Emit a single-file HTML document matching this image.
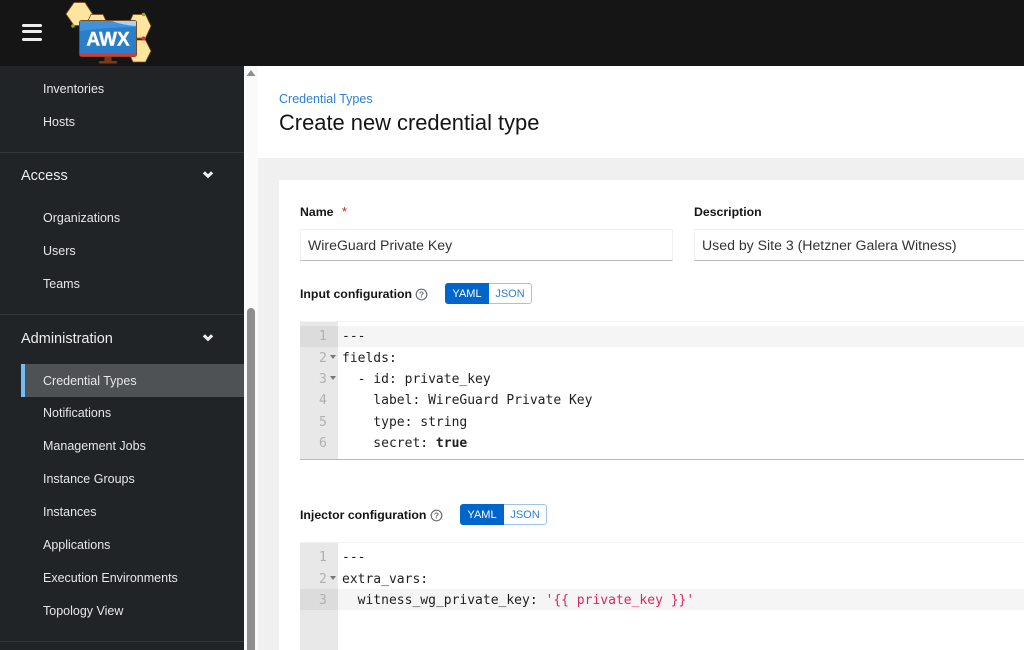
<!DOCTYPE html>
<html lang="en"><head><meta charset="utf-8"><title>Create new credential type</title>
<style>
html,body{margin:0;padding:0;width:1024px;height:650px;overflow:hidden;background:#fff}
body{position:relative;font-family:"Liberation Sans",sans-serif}
.b{position:absolute}
.t{position:absolute;white-space:pre;line-height:20px;height:20px}
.n{color:#e6e7e8;font-size:12.5px}
.h{color:#eceded;font-size:14.5px}
.l{color:#151515;font-size:12.3px;font-weight:bold}
.v{color:#333;font-size:14.1px}
.c{color:#1f1f1f;font-family:"DejaVu Sans Mono",monospace;font-size:13px}
.g{color:#b0b0b0;font-family:"DejaVu Sans Mono",monospace;font-size:13px}
.y{position:absolute;box-sizing:border-box;height:21px;background:#06c;color:#fff;font-size:11px;line-height:22px;text-align:center;border-radius:3px 0 0 3px;width:44px}
.j{position:absolute;box-sizing:border-box;height:21px;background:#fff;color:#2b7fd6;font-size:11px;line-height:21px;text-align:center;border:1px solid #9cc4ec;border-left:0;border-radius:0 3px 3px 0;width:43px}
</style></head><body>
<div class="b" style="left:0;top:0;width:1024px;height:66px;background:#151515"></div>
<div class="b" style="left:22px;top:24px;width:20px;height:3.300px;background:#eee;border-radius:1.500px"></div>
<div class="b" style="left:22px;top:30px;width:20px;height:3.300px;background:#eee;border-radius:1.500px"></div>
<div class="b" style="left:22px;top:37.500px;width:20px;height:3.300px;background:#eee;border-radius:1.500px"></div>
<svg class="b" style="left:60px;top:0" width="100" height="66" viewBox="60 0 100 66">
<g fill="#fbe59f" stroke="#7c4a22" stroke-width=".8">
<path d="M66 14 74 2.500H85L92.500 14 85 25.500H74Z"/>
<path d="M85 27 91 14.500H103L109 27 103 38H91Z"/>
<path d="M128 26 133 14.500H145.500L151 26 145.500 38H133Z"/>
<path d="M128 51 133 40H145.500L151 51 145.500 62H133Z"/></g>
<path d="M136 38.500H143" stroke="#7c4a22"/>
<circle cx="143.500" cy="38.500" r="2" fill="#e0303a"/><circle cx="143.500" cy="14.500" r="1.800" fill="#8aa82c"/><circle cx="73" cy="26" r="1.800" fill="#8aa82c"/>
<rect x="104.500" y="56" width="7" height="6" fill="#7c3a1c"/><rect x="99" y="61" width="18" height="2.500" rx="1" fill="#7c3a1c"/>
<rect x="79.500" y="20.500" width="57" height="36" rx="2" fill="#2b7fca" stroke="#7c4a22"/>
<path d="M80 21H136V27Q108 27 80 31Z" fill="#3f93da"/><path d="M112 21H136V26Q122 25 112 21Z" fill="#a8d6f4"/>
<rect x="80" y="53.500" width="56" height="2.800" fill="#e2342f"/>
<text x="108" y="45.500" text-anchor="middle" font-family="Liberation Sans" font-weight="bold" font-size="19" fill="#fff" stroke="#fff" stroke-width=".4">AWX</text>
</svg>

<div class="b" style="left:0;top:66px;width:244px;height:584px;background:#212427"></div>
<div class="b" style="left:244px;top:66px;width:14px;height:584px;background:#fafafa"></div>
<div class="b" style="left:258px;top:66px;width:766px;height:92px;background:#fff"></div>
<div class="b" style="left:258px;top:158px;width:766px;height:492px;background:#f0f0f0"></div>
<div class="b" style="left:279px;top:180px;width:745px;height:470px;background:#fff"></div>
<div class="b" style="left:247px;top:308px;width:8px;height:342px;background:#8e8e8e;border-radius:4px 4px 0 0"></div>
<svg class="b" style="left:246px;top:69px" width="11" height="8"><path d="M5 1 9.500 7H.5Z" fill="#8e8e8e"/></svg>

<div class="b" style="left:0;top:152px;width:244px;height:1px;background:#34373a"></div>
<div class="b" style="left:0;top:314px;width:244px;height:1px;background:#34373a"></div>
<div class="b" style="left:0;top:641px;width:244px;height:1px;background:#34373a"></div>
<div class="b" style="left:21px;top:364px;width:223px;height:33px;background:#4f5255"></div>
<div class="b" style="left:21px;top:364px;width:4px;height:33px;background:#73bcf7"></div>

<div class="t n" style="left:43px;top:79px">Inventories</div>
<div class="t n" style="left:43px;top:112px">Hosts</div>
<div class="t h" style="left:21px;top:166px">Access</div>
<div class="t n" style="left:43px;top:208px">Organizations</div>
<div class="t n" style="left:43px;top:241px">Users</div>
<div class="t n" style="left:43px;top:274px">Teams</div>
<div class="t h" style="left:21px;top:329px">Administration</div>
<div class="t n" style="left:43px;top:371px">Credential Types</div>
<div class="t n" style="left:43px;top:403px">Notifications</div>
<div class="t n" style="left:43px;top:436px">Management Jobs</div>
<div class="t n" style="left:43px;top:469px">Instance Groups</div>
<div class="t n" style="left:43px;top:502px">Instances</div>
<div class="t n" style="left:43px;top:535px">Applications</div>
<div class="t n" style="left:43px;top:568px">Execution Environments</div>
<div class="t n" style="left:43px;top:601px">Topology View</div>
<svg class="b" style="left:202px;top:170px" width="12" height="10"><path d="M.8 3.400 3 1.200 6 4.200 9 1.200 11.200 3.400 6 8.400Z" fill="#f0f0f0"/></svg>
<svg class="b" style="left:202px;top:333px" width="12" height="10"><path d="M.8 3.400 3 1.200 6 4.200 9 1.200 11.200 3.400 6 8.400Z" fill="#f0f0f0"/></svg>

<div class="t" style="left:279px;top:89px;color:#2b7fd6;font-size:12.5px">Credential Types</div>
<div class="t" style="left:279px;top:110px;height:26px;line-height:26px;color:#151515;font-size:21.900px">Create new credential type</div>

<div class="t l" style="left:300px;top:202px">Name</div>
<div class="t" style="left:342px;top:202px;color:#c9190b;font-size:12.500px">*</div>
<div class="t l" style="left:694px;top:202px">Description</div>
<div class="b" style="box-sizing:border-box;left:300px;top:229px;width:373px;height:32px;border:1px solid #f0f0f0;border-bottom:1px solid #b8bbbe"></div>
<div class="b" style="box-sizing:border-box;left:694px;top:229px;width:330px;height:32px;border:1px solid #f0f0f0;border-right:0;border-bottom:1px solid #b8bbbe"></div>
<div class="t v" style="left:308px;top:235px">WireGuard Private Key</div>
<div class="t v" style="left:702px;top:235px">Used by Site 3 (Hetzner Galera Witness)</div>

<div class="t l" style="left:300px;top:284px">Input configuration</div>
<svg class="b" style="left:415px;top:288px" width="13" height="13"><circle cx="6.500" cy="6.500" r="5.300" fill="none" stroke="#6a6e73" stroke-width="1.200"/><text x="6.500" y="9.500" text-anchor="middle" font-family="Liberation Sans" font-weight="bold" font-size="8.500" fill="#6a6e73">?</text></svg>
<div class="y" style="left:445px;top:283px">YAML</div><div class="j" style="left:489px;top:283px">JSON</div>

<div class="b" style="left:300px;top:321px;width:724px;height:1px;background:#f3f3f3"></div>
<div class="b" style="left:300px;top:322px;width:38px;height:137px;background:#e8e8e8"></div>
<div class="b" style="left:300px;top:326px;width:38px;height:21px;background:#dcdcdc"></div>
<div class="b" style="left:338px;top:326px;width:686px;height:21px;background:#f5f5f5"></div>
<div class="b" style="left:300px;top:459px;width:724px;height:1px;background:#b8bbbe"></div>
<div class="t g" style="left:319px;top:327px">1</div>
<div class="t g" style="left:319px;top:349px">2</div>
<div class="t g" style="left:319px;top:370px">3</div>
<div class="t g" style="left:319px;top:391px">4</div>
<div class="t g" style="left:319px;top:413px">5</div>
<div class="t g" style="left:319px;top:434px">6</div>
<svg class="b" style="left:330px;top:355px" width="6" height="5"><path d="M0 0H6L3 4Z" fill="#777"/></svg>
<svg class="b" style="left:330px;top:376px" width="6" height="5"><path d="M0 0H6L3 4Z" fill="#777"/></svg>
<div class="t c" style="left:342px;top:327px">---</div>
<div class="t c" style="left:342px;top:349px">fields:</div>
<div class="t c" style="left:342px;top:370px">  - id: private_key</div>
<div class="t c" style="left:342px;top:391px">    label: WireGuard Private Key</div>
<div class="t c" style="left:342px;top:413px">    type: string</div>
<div class="t c" style="left:342px;top:434px">    secret: <b>true</b></div>

<div class="t l" style="left:300px;top:505px">Injector configuration</div>
<svg class="b" style="left:430px;top:509px" width="13" height="13"><circle cx="6.500" cy="6.500" r="5.300" fill="none" stroke="#6a6e73" stroke-width="1.200"/><text x="6.500" y="9.500" text-anchor="middle" font-family="Liberation Sans" font-weight="bold" font-size="8.500" fill="#6a6e73">?</text></svg>
<div class="y" style="left:460px;top:504px">YAML</div><div class="j" style="left:504px;top:504px">JSON</div>

<div class="b" style="left:300px;top:542px;width:724px;height:1px;background:#f3f3f3"></div>
<div class="b" style="left:300px;top:543px;width:38px;height:107px;background:#e8e8e8"></div>
<div class="b" style="left:300px;top:589px;width:38px;height:21px;background:#dcdcdc"></div>
<div class="b" style="left:338px;top:589px;width:686px;height:21px;background:#f5f5f5"></div>
<div class="t g" style="left:319px;top:548px">1</div>
<div class="t g" style="left:319px;top:570px">2</div>
<div class="t g" style="left:319px;top:591px">3</div>
<svg class="b" style="left:330px;top:576px" width="6" height="5"><path d="M0 0H6L3 4Z" fill="#777"/></svg>
<div class="t c" style="left:342px;top:548px">---</div>
<div class="t c" style="left:342px;top:570px">extra_vars:</div>
<div class="t c" style="left:342px;top:591px">  witness_wg_private_key: <span style="color:#e0245e">'{{ private_key }}'</span></div>
</body></html>
